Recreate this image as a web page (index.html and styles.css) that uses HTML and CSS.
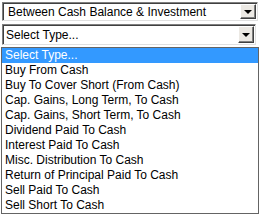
FILE: index.html
```html
<!DOCTYPE html>
<html lang="en">
<head>
  <meta charset="UTF-8" />
  <title>Transfer Type</title>
  <link rel="stylesheet" href="styles.css">
</head>
<body>
  <div class="combo combo-main">
    <span class="combo-text">Between Cash Balance &amp; Investment</span>
    <span class="combo-btn"><span class="arrow"></span></span>
  </div>

  <div class="combo combo-type">
    <span class="combo-text">Select Type...</span>
    <span class="combo-btn"><span class="arrow"></span></span>
  </div>

  <ul class="dropdown">
    <li class="selected">Select Type...</li>
    <li>Buy From Cash</li>
    <li>Buy To Cover Short (From Cash)</li>
    <li>Cap. Gains, Long Term, To Cash</li>
    <li>Cap. Gains, Short Term, To Cash</li>
    <li>Dividend Paid To Cash</li>
    <li>Interest Paid To Cash</li>
    <li>Misc. Distribution To Cash</li>
    <li>Return of Principal Paid To Cash</li>
    <li>Sell Paid To Cash</li>
    <li>Sell Short To Cash</li>
  </ul>
</body>
</html>
```

FILE: styles.css
```css
body {
  margin: 0;
  background: #fff;
  font-family: "Liberation Sans", Arial, sans-serif;
  font-size: 12px;
  color: #000;
}
.combo {
  display: flex;
  align-items: stretch;
  box-sizing: border-box;
  border-top: 1px solid #7f7f7f;
  border-left: 1px solid #7f7f7f;
  border-right: 1px solid #e0e0e0;
  border-bottom: 1px solid #e0e0e0;
  box-shadow: inset 1px 1px 0 #404040;
  background: #fff;
}
.combo-main {
  margin: 2px 2px 0 2px;
  width: 256px;
  height: 19px;
}
.combo-type {
  margin: 3px 4px 0 2px;
  width: 254px;
  height: 21px;
}
.combo-text {
  flex: 1;
  display: flex;
  align-items: center;
  padding-left: 3px;
  white-space: nowrap;
  overflow: hidden;
}
.combo-main .combo-text {
  padding-left: 5px;
}
.combo-btn {
  width: 16px;
  margin: 1px 1px 1px 0;
  box-sizing: border-box;
  background: #ece9e4;
  border-top: 1px solid #fff;
  border-left: 1px solid #fff;
  border-right: 1px solid #404040;
  border-bottom: 1px solid #404040;
  box-shadow: inset -1px -1px 0 #808080;
  display: flex;
  align-items: center;
  justify-content: center;
}
.arrow {
  width: 0;
  height: 0;
  border-left: 4px solid transparent;
  border-right: 4px solid transparent;
  border-top: 4px solid #000;
  margin-top: 1px;
}
.dropdown {
  list-style: none;
  margin: 2px 0 0 1px;
  padding: 0;
  width: 258px;
  box-sizing: border-box;
  border: 1px solid #646464;
}
.dropdown li {
  height: 15px;
  line-height: 15px;
  padding-left: 3px;
  white-space: nowrap;
}
.dropdown li.selected {
  background: #3399ff;
  color: #fff;
}
```
